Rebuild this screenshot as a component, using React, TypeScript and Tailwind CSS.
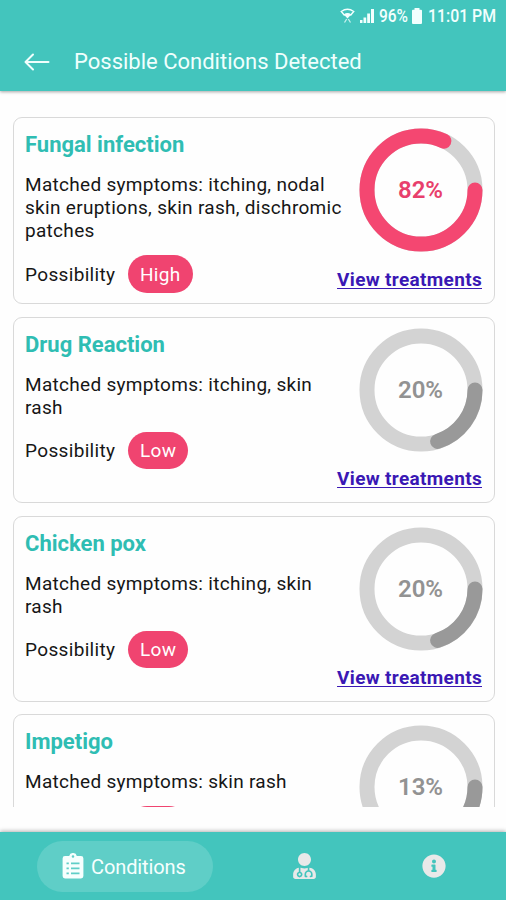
import { FaInfoCircle, FaUserMd } from "react-icons/fa";

type Condition = {
  name: string;
  symptoms: string;
  possibility: string;
  percent: number;
};

const conditions: Condition[] = [
  {
    name: "Fungal infection",
    symptoms: "itching, nodal skin eruptions, skin rash, dischromic patches",
    possibility: "High",
    percent: 82,
  },
  {
    name: "Drug Reaction",
    symptoms: "itching, skin rash",
    possibility: "Low",
    percent: 20,
  },
  {
    name: "Chicken pox",
    symptoms: "itching, skin rash",
    possibility: "Low",
    percent: 20,
  },
  {
    name: "Impetigo",
    symptoms: "skin rash",
    possibility: "Low",
    percent: 13,
  },
];

const StatusBar = () => (
  <div className="flex h-8 items-center justify-end pr-[10px] text-[#f2fffe]">
    <svg className="mr-[4px] h-4 w-[15px]" viewBox="0 0 15 16" fill="none">
      <path
        d="M1.3 3.5Q7.5-.8 13.7 3.5L10.8 7Q7.5 4.6 4.2 7Z"
        stroke="currentColor"
        strokeWidth="1.5"
      />
      <path d="M4 6.8Q7.5 4.6 11 6.8L7.5 10.6Z" fill="currentColor" />
      <path
        d="M4.5 14.5l2.2-3.5M10.5 14.5l-2.2-3.5"
        stroke="currentColor"
        strokeWidth="1.3"
        opacity=".75"
      />
    </svg>
    <svg className="mr-[4px] h-4 w-4" viewBox="0 0 16 16" fill="currentColor">
      <path d="M1 12h2.500v3H1zM4.500 9.500h2.700V15H4.500zM8.200 5.500H11V15H8.200zM12 1h3v14h-3z" />
    </svg>
    <span className="w-[32px] whitespace-nowrap">
      <span className="block origin-left scale-x-[0.86] text-[18px] leading-5 font-medium">
        96%
      </span>
    </span>
    <svg
      className="mr-[6px] ml-[1px] h-4 w-[10px]"
      viewBox="0 0 10 16"
      fill="currentColor"
    >
      <path d="M2.5 0h5v1.8H9a1 1 0 0 1 1 1V15a1 1 0 0 1-1 1H1a1 1 0 0 1-1-1V2.8a1 1 0 0 1 1-1h1.5z" />
    </svg>
    <span className="w-[68px] whitespace-nowrap">
      <span className="block origin-left scale-x-[0.88] text-[18px] leading-5 font-medium">
        11:01 PM
      </span>
    </span>
  </div>
);

const ClipboardIcon = () => (
  <svg className="h-[26px] w-[22px]" viewBox="0 0 22 26">
    <path
      fill="currentColor"
      fillRule="evenodd"
      d="M3 3H7.2A3.9 3.9 0 0 1 14.8 3H19A2.4 2.4 0 0 1 21.4 5.4V23A2.4 2.4 0 0 1 19 25.4H3A2.4 2.4 0 0 1 .6 23V5.4A2.4 2.4 0 0 1 3 3ZM11 2.2a1.3 1.3 0 1 0 0 2.6a1.3 1.3 0 0 0 0-2.6Z"
    />
    <path
      d="M4.5 10.3h2.3M9 10.3h8.5M4.5 15.3h2.3M9 15.3h8.5M4.5 20.3h2.3M9 20.3h8.5"
      stroke="#5fcec7"
      strokeWidth="1.7"
    />
  </svg>
);

const Ring = ({ percent }: { percent: number }) => {
  const likely = percent > 50;
  return (
    <div className="grid h-[124px] w-[124px] place-items-center">
      <svg
        className="col-start-1 row-start-1"
        width="124"
        height="124"
        viewBox="0 0 124 124"
        fill="none"
        strokeWidth="15"
      >
        <circle cx="62" cy="62" r="54" stroke="#d3d3d3" />
        <circle
          cx="62"
          cy="62"
          r="54"
          pathLength="100"
          strokeDasharray={`${percent} 100`}
          strokeLinecap="round"
          stroke={likely ? "#f44771" : "#999999"}
        />
      </svg>
      <span
        className={`col-start-1 row-start-1 text-[24px] font-semibold ${
          likely ? "text-[#e83f6c]" : "text-[#929292]"
        }`}
      >
        {`${percent}%`}
      </span>
    </div>
  );
};

const ConditionCard = ({ name, symptoms, possibility, percent }: Condition) => (
  <div className="flex min-h-[186px] shrink-0 justify-between rounded-[9px] border border-[#d9d9d9] pt-[10px] pr-[11px] pb-[10px] pl-[11px]">
    <div className="w-[322px] shrink-0 pt-px">
      <h2 className="text-[22px] leading-8 font-bold text-[#2fbdb3]">{name}</h2>
      <p className="mt-[12px] text-[19px] leading-[23px] tracking-[0.3px] text-[#161616]">
        {`Matched symptoms: ${symptoms}`}
      </p>
      <div className="mt-[13px] flex items-center gap-[12.5px]">
        <span className="pt-[2px] text-[19px] tracking-[0.34px] text-[#161616]">
          Possibility
        </span>
        <span className="flex h-[37.5px] items-center rounded-full bg-[#f04470] px-[12px] pt-[2px] text-[19px] tracking-[0.34px] text-white">
          {possibility}
        </span>
      </div>
    </div>
    <div className="-ml-4 flex w-[124px] shrink-0 flex-col items-end justify-between">
      <Ring percent={percent} />
      <a className="mr-[0.5px] text-[19px] leading-[26px] font-bold tracking-[0.33px] whitespace-nowrap text-[#3a18b4] underline decoration-1 underline-offset-2">
        View treatments
      </a>
    </div>
  </div>
);

export default function App() {
  return (
    <div className="flex h-[900px] w-[506px] flex-col overflow-hidden bg-[#fefefe] font-[Roboto,sans-serif]">
      <header className="z-10 h-[91px] shrink-0 bg-[#43c5bd] shadow-[0_1px_3px_rgba(0,0,0,0.35)]">
        <StatusBar />
        <div className="flex h-[59px] items-center pl-6 text-[#f0fffd]">
          <svg
            className="h-[18px] w-[26px]"
            viewBox="0 0 26 18"
            fill="none"
            stroke="currentColor"
            strokeWidth="2"
            strokeLinecap="round"
            strokeLinejoin="round"
          >
            <path d="M24.5 9H2M9 1.5L1.5 9L9 16.5" />
          </svg>
          <h1 className="ml-6 text-[22px]">Possible Conditions Detected</h1>
        </div>
      </header>
      <main className="mt-[26.25px] flex h-[690px] shrink-0 flex-col gap-[12.9px] overflow-hidden pr-[11.5px] pl-[13px]">
        {conditions.map((condition) => (
          <ConditionCard key={condition.name} {...condition} />
        ))}
      </main>
      <nav className="mt-auto flex h-[68px] shrink-0 items-center bg-[#43c5bd] text-[#e9e9e9] shadow-[0_-1px_4px_rgba(0,0,0,0.3)]">
        <div className="ml-[37px] flex h-[51px] w-[176px] items-center rounded-full bg-[#5fcec7] pl-[25px] text-[#f6fffe]">
          <ClipboardIcon />
          <span className="ml-[7px] pt-[2px] text-[20px] tracking-[-0.1px]">
            Conditions
          </span>
        </div>
        <FaUserMd className="ml-[79px] h-[26px] w-[25px]" />
        <FaInfoCircle className="ml-[105px] h-[24px] w-[24px]" />
      </nav>
    </div>
  );
}
